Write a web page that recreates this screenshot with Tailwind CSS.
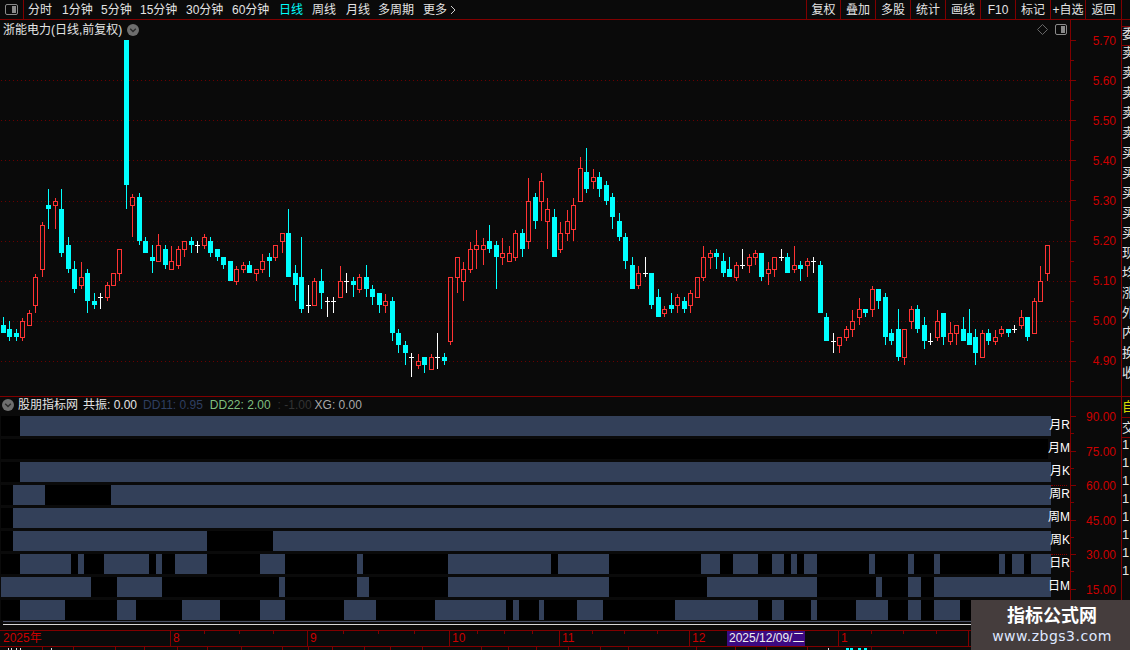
<!DOCTYPE html>
<html lang="en">
  <head>
    <meta charset="UTF-8" />
    <title>浙能电力 日线</title>
    <script src="https://cdn.jsdelivr.net/npm/@tailwindcss/browser@4"></script>
  </head>
  <body class="bg-[#0a0a0a]">
    <div class="relative flex flex-col w-[1130px] h-[650px] overflow-hidden bg-[#0a0a0a] text-[12px] leading-[14px] text-[#e4e4e4] font-['Liberation_Sans','Noto_Sans_CJK_SC',sans-serif]">
      <!-- toolbar -->
      <div class="flex items-center h-[20px] shrink-0 border-b border-[#800000]">
        <div class="flex items-center justify-center w-[24px] h-full border-r border-[#800000]">
          <svg width="13" height="11" viewBox="0 0 13 11"><rect x="0.5" y="0.5" width="12" height="10" rx="1.5" fill="none" stroke="#8a8a8a"/><rect x="7" y="2" width="4" height="7" fill="#8a8a8a"/></svg>
        </div>
        <div class="flex items-center gap-[10px] pl-[4px] flex-1 whitespace-nowrap">
          <span class="w-[24px]">分时</span>
          <span class="w-[29px]">1分钟</span>
          <span class="w-[29px]">5分钟</span>
          <span class="w-[36px]">15分钟</span>
          <span class="w-[36px]">30分钟</span>
          <span class="w-[37px]">60分钟</span>
          <span class="w-[23px] text-[#00ffff]">日线</span>
          <span class="w-[24px]">周线</span>
          <span class="w-[22px]">月线</span>
          <span class="w-[35px]">多周期</span>
          <span class="flex items-center gap-[3px]">更多<svg width="6" height="10" viewBox="0 0 6 10"><path d="M1 1l4 4-4 4" fill="none" stroke="#d0d0d0"/></svg></span>
        </div>
        <div class="flex h-full">
          <span class="flex items-center justify-center w-[34px] border-l border-[#800000]">复权</span>
          <span class="flex items-center justify-center w-[35px] border-l border-[#800000]">叠加</span>
          <span class="flex items-center justify-center w-[35px] border-l border-[#800000]">多股</span>
          <span class="flex items-center justify-center w-[35px] border-l border-[#800000]">统计</span>
          <span class="flex items-center justify-center w-[35px] border-l border-[#800000]">画线</span>
          <span class="flex items-center justify-center w-[35px] border-l border-[#800000]">F10</span>
          <span class="flex items-center justify-center w-[35px] border-l border-[#800000]">标记</span>
          <span class="flex items-center justify-center w-[35px] border-l border-[#800000] whitespace-nowrap">+自选</span>
          <span class="flex items-center justify-center w-[37px] border-x border-[#800000]">返回</span>
          <span class="w-[8px]"></span>
        </div>
      </div>

      <div class="flex flex-1 min-h-0">
        <div class="flex flex-col w-[1121px] shrink-0">
          <!-- price pane -->
          <div class="flex h-[377px] shrink-0 border-b border-[#800000]">
            <div class="relative w-[1070px] shrink-0">
              <svg id="candles" class="block" width="1070" height="376" viewBox="0 20 1070 376" shape-rendering="crispEdges"></svg>
              <div class="absolute left-[3px] top-[3px] flex items-center gap-[5px]">
                <span>浙能电力(日线,前复权)</span>
                <svg width="12" height="12" viewBox="0 0 12 12"><circle cx="6" cy="6" r="6" fill="#6e6e6e"/><path d="M3.2 4.8L6 7.6l2.8-2.8" fill="none" stroke="#2a2a2a" stroke-width="1.4"/></svg>
              </div>
              <div class="absolute right-[3px] top-[4px] flex items-center gap-[7px]">
                <svg width="11" height="11" viewBox="0 0 11 11"><path d="M5.5 .5l5 5-5 5-5-5z" fill="none" stroke="#666"/></svg>
                <svg width="12" height="11" viewBox="0 0 12 11"><rect x="0.5" y="0.5" width="11" height="10" rx="1.5" fill="none" stroke="#8a8a8a"/><rect x="6" y="2" width="4" height="7" fill="#8a8a8a"/></svg>
              </div>
            </div>
            <div class="relative flex-1 border-l border-[#800000] text-[#cc0000]">
              <svg id="price-ticks" class="absolute left-0 top-0" width="8" height="376" shape-rendering="crispEdges"></svg>
              <div class="flex flex-col items-end pr-[5px] pt-[1px]">
                <span class="flex items-center h-[40px]">5.70</span>
                <span class="flex items-center h-[40px]">5.60</span>
                <span class="flex items-center h-[40px]">5.50</span>
                <span class="flex items-center h-[40px]">5.40</span>
                <span class="flex items-center h-[40px]">5.30</span>
                <span class="flex items-center h-[40px]">5.20</span>
                <span class="flex items-center h-[40px]">5.10</span>
                <span class="flex items-center h-[40px]">5.00</span>
                <span class="flex items-center h-[40px]">4.90</span>
              </div>
            </div>
          </div>

          <!-- indicator pane -->
          <div class="flex h-[234px] shrink-0 border-b border-[#800000]">
            <div class="w-[1070px] shrink-0 flex flex-col">
              <div class="flex items-center h-[19px] pl-[2px] pb-[3px] shrink-0 whitespace-nowrap">
                <svg width="12" height="12" viewBox="0 0 12 12"><circle cx="6" cy="6" r="6" fill="#6e6e6e"/><path d="M3.2 4.8L6 7.6l2.8-2.8" fill="none" stroke="#2a2a2a" stroke-width="1.4"/></svg>
                <span class="ml-[4px]">股朋指标网</span>
                <span class="ml-[5px]">共振: 0.00</span>
                <span class="ml-[6px] text-[#2f3f60]">DD11: 0.95</span>
                <span class="ml-[7px] text-[#7fbf7f]">DD22: 2.00</span>
                <span class="ml-[7px] text-[#333333]">: -1.00</span>
                <span class="ml-[3px] text-[#a8a8a8]">XG: 0.00</span>
              </div>
              <div id="bands" class="flex flex-col gap-[3px] pl-[1px] shrink-0"></div>
              <div class="mt-[1px] ml-[3px] h-[1px] bg-[#4a5268]"></div>
              <div class="mt-[2px] ml-[3px] h-[1px] bg-[#d8d8d8]"></div>
            </div>
            <div class="relative flex-1 border-l border-[#800000] text-[#cc0000]">
              <svg id="ind-ticks" class="absolute left-0 top-0" width="8" height="233" shape-rendering="crispEdges"></svg>
              <div class="flex flex-col items-end pr-[5px] pt-[3px]">
                <span class="flex items-center h-[34.5px]">90.00</span>
                <span class="flex items-center h-[34.5px]">75.00</span>
                <span class="flex items-center h-[34.5px]">60.00</span>
                <span class="flex items-center h-[34.5px]">45.00</span>
                <span class="flex items-center h-[34.5px]">30.00</span>
                <span class="flex items-center h-[34.5px]">15.00</span>
              </div>
            </div>
          </div>

          <!-- date axis -->
          <div class="relative flex h-[16px] shrink-0 border-b border-[#800000] text-[#cc0000] whitespace-nowrap">
            <span class="w-[170px] pl-[3px]">2025年</span>
            <span class="w-[137px] pl-[2px] border-l border-[#800000]">8</span>
            <span class="w-[142px] pl-[2px] border-l border-[#800000]">9</span>
            <span class="w-[110px] pl-[2px] border-l border-[#800000]">10</span>
            <span class="w-[130px] pl-[2px] border-l border-[#800000]">11</span>
            <span class="w-[38px] pl-[2px] border-l border-[#800000]">12</span>
            <span class="w-[78px] pl-[2px] bg-[#3c0a82] text-[#f0f0f0]">2025/12/09/二</span>
            <span class="w-[33px]"></span>
            <span class="w-[130px] pl-[2px] border-l border-[#800000]">1</span>
            <span class="w-[20px] pl-[2px] border-l border-[#800000]">2</span>
            <svg id="date-ticks" class="absolute left-0 top-0" width="1121" height="4" shape-rendering="crispEdges"></svg>
          </div>

          <svg id="bottom-strip" class="block" width="1121" height="3" shape-rendering="crispEdges"></svg>
        </div>

        <!-- clipped quote column -->
        <div class="w-[9px] shrink-0 border-l border-[#800000] overflow-hidden text-[13px] whitespace-nowrap">
          <div class="flex flex-col h-[377px] pt-[6px] border-b border-[#800000]">
            <span class="h-[20px] border-y border-[#800000]">委</span>
            <span class="h-[20px]">卖</span>
            <span class="h-[20px]">卖</span>
            <span class="h-[20px]">卖</span>
            <span class="h-[20px]">卖</span>
            <span class="h-[20px]">卖</span>
            <span class="h-[20px]">买</span>
            <span class="h-[20px]">买</span>
            <span class="h-[20px]">买</span>
            <span class="h-[20px]">买</span>
            <span class="h-[20px]">买</span>
            <span class="h-[20px]">现</span>
            <span class="h-[20px]">均</span>
            <span class="h-[20px]">涨</span>
            <span class="h-[20px]">外</span>
            <span class="h-[20px]">内</span>
            <span class="h-[20px]">换</span>
            <span class="h-[20px]">收</span>
          </div>
          <div class="flex items-center h-[21px] text-[#d8d800] border-b border-[#800000]">自</div>
          <div class="flex items-center h-[20px] border-b border-[#800000]">交</div>
          <div class="flex flex-col">
            <span class="h-[18px]">1</span>
            <span class="h-[18px]">1</span>
            <span class="h-[18px]">1</span>
            <span class="h-[18px]">1</span>
            <span class="h-[18px]">1</span>
            <span class="h-[18px]">1</span>
            <span class="h-[18px]">1</span>
            <span class="h-[18px]">1</span>
          </div>
        </div>
      </div>

      <!-- watermark -->
      <div class="absolute left-[971px] top-[600px] flex flex-col items-center w-[159px] h-[50px] pt-[5px] pl-[3px] bg-[#453d3d]">
        <span class="text-[18px] leading-[22px] font-bold text-white">指标公式网</span>
        <span class="text-[14px] leading-[18px] tracking-[0.5px] text-[#dfe8ff] font-['DejaVu_Sans',sans-serif]">www.zbgs3.com</span>
      </div>
    </div>

    <script>
      const SVG_NS = "http://www.w3.org/2000/svg";
      const RED = "#ff3333";
      const CYAN = "#00ffff";
      const LINE = "#800000";

      function addRect(svg, x, y, w, h, fill) {
        const r = document.createElementNS(SVG_NS, "rect");
        r.setAttribute("x", x);
        r.setAttribute("y", y);
        r.setAttribute("width", w);
        r.setAttribute("height", h);
        r.setAttribute("fill", fill);
        svg.appendChild(r);
      }

      // x, high, body top, body bottom, low (pixels), c=cyan r=red w=doji
      const candles = [
        [3,317,325,333,333,"c"],[9,321,329,337,341,"c"],[16,329,333,337,341,"c"],[22,318,321,338,341,"r"],
        [29,310,313,326,326,"r"],[35,274,277,306,313,"r"],[42,222,225,270,277,"r"],[48,189,205,209,229,"c"],
        [55,198,201,206,229,"r"],[61,189,209,253,257,"c"],[68,237,245,269,273,"c"],[74,261,269,289,293,"c"],
        [81,262,277,286,289,"r"],[87,269,273,301,313,"c"],[94,293,301,305,309,"c"],[100,293,297,297,309,"w"],
        [107,282,285,298,301,"r"],[113,273,273,286,286,"r"],[119,249,249,274,281,"r"],[126,40,40,185,209,"c"],
        [132,194,197,206,237,"r"],[139,193,197,241,245,"c"],[145,237,241,253,253,"c"],[152,245,257,261,273,"c"],
        [158,234,245,262,262,"r"],[165,245,249,265,269,"c"],[171,246,261,270,270,"r"],[178,246,249,266,269,"r"],
        [184,241,241,250,257,"r"],[191,237,241,245,253,"c"],[197,241,245,245,253,"w"],[204,234,237,246,249,"r"],
        [210,237,241,253,257,"c"],[217,249,249,257,261,"c"],[223,257,257,265,269,"c"],[230,261,261,281,281,"c"],
        [236,266,269,282,285,"r"],[243,262,265,270,273,"r"],[249,261,265,273,273,"c"],[256,269,269,274,281,"r"],
        [262,254,261,270,273,"r"],[269,253,257,261,277,"c"],[275,245,245,258,261,"r"],[282,233,233,242,253,"r"],
        [288,209,233,277,277,"c"],[295,265,273,285,301,"c"],[301,237,277,309,313,"c"],[308,285,305,305,313,"w"],
        [314,278,281,306,306,"r"],[321,269,281,293,309,"c"],[327,297,301,301,317,"w"],[333,297,301,301,313,"w"],
        [340,266,281,298,298,"r"],[346,273,281,281,293,"w"],[353,277,281,285,297,"c"],[359,274,277,290,293,"r"],
        [366,265,277,289,297,"c"],[372,285,289,297,305,"c"],[379,293,293,305,313,"c"],[385,294,301,306,313,"r"],
        [392,297,301,333,341,"c"],[398,329,333,345,353,"c"],[405,341,345,353,365,"c"],[411,353,357,357,377,"w"],
        [418,354,361,366,369,"r"],[424,357,357,365,373,"c"],[431,354,357,370,370,"r"],[437,333,357,357,369,"w"],
        [444,353,357,361,365,"c"],[450,277,277,342,345,"r"],[457,257,257,278,293,"r"],[463,262,269,282,301,"r"],
        [470,242,249,270,273,"r"],[476,230,245,250,269,"r"],[483,238,245,250,265,"r"],[489,225,241,249,253,"c"],
        [496,241,245,257,289,"c"],[502,238,253,258,265,"r"],[509,246,253,262,262,"r"],[515,230,233,258,261,"r"],
        [522,229,233,249,257,"c"],[528,178,201,242,249,"r"],[535,193,197,221,229,"c"],[541,173,181,202,221,"r"],
        [547,198,209,222,249,"r"],[554,209,217,257,257,"c"],[560,222,233,250,253,"r"],[567,210,221,234,241,"r"],
        [573,198,205,230,241,"r"],[580,157,168,202,202,"r"],[586,148,172,189,193,"c"],[593,169,177,182,189,"r"],
        [599,172,177,189,197,"c"],[606,181,185,201,205,"c"],[612,193,197,217,229,"c"],[619,213,221,237,241,"c"],
        [625,233,237,261,269,"c"],[632,257,265,289,289,"c"],[638,266,273,286,289,"r"],[645,257,273,273,277,"w"],
        [651,273,273,305,309,"c"],[658,289,297,317,317,"c"],[664,306,309,314,317,"r"],[671,293,305,309,313,"c"],
        [677,294,297,306,313,"r"],[684,297,301,309,313,"c"],[690,290,293,306,313,"r"],[697,277,277,298,298,"r"],
        [703,246,257,278,281,"r"],[710,250,253,258,269,"r"],[716,249,253,257,269,"c"],[723,253,261,273,277,"c"],
        [729,257,269,277,277,"c"],[736,262,265,278,281,"r"],[742,249,265,265,269,"w"],[749,254,257,266,273,"r"],
        [755,250,253,258,265,"r"],[761,253,253,277,281,"c"],[768,262,269,274,285,"r"],[774,257,257,270,277,"r"],
        [781,249,257,257,261,"w"],[787,253,257,273,273,"c"],[794,246,265,270,273,"r"],[800,261,265,269,281,"c"],
        [807,258,261,266,277,"r"],[813,257,261,261,273,"w"],[820,261,265,313,313,"c"],[826,313,317,341,341,"c"],
        [833,333,341,341,353,"w"],[839,337,337,346,353,"r"],[846,326,329,338,341,"r"],[852,310,321,330,337,"r"],
        [859,298,309,318,325,"r"],[865,309,309,313,317,"c"],[872,286,289,310,317,"r"],[878,289,289,301,309,"c"],
        [885,293,297,337,345,"c"],[891,329,333,341,345,"c"],[898,309,329,357,361,"c"],[904,329,329,358,365,"r"],
        [911,306,309,322,329,"r"],[917,305,309,329,333,"c"],[924,317,325,341,349,"c"],[930,333,341,341,345,"w"],
        [937,310,321,338,341,"r"],[943,313,313,337,345,"c"],[950,322,333,342,345,"r"],[956,325,325,334,345,"r"],
        [963,317,329,341,341,"c"],[969,309,333,345,345,"c"],[975,329,337,353,365,"c"],[982,330,333,358,358,"r"],
        [988,329,333,341,345,"c"],[995,330,337,342,345,"r"],[1001,326,329,334,337,"r"],[1008,329,329,333,337,"c"],
        [1014,325,329,329,333,"w"],[1021,310,317,326,329,"r"],[1027,317,317,337,341,"c"],[1034,298,301,334,334,"r"],
        [1040,266,281,302,302,"r"],[1047,245,245,274,281,"r"],
      ];

      const chart = document.getElementById("candles");
      // dotted grid lines
      [80, 120, 160, 201, 241, 281, 321, 361].forEach((y) => {
        for (let x = 1; x < 1070; x += 4) addRect(chart, x, y, 1, 1, "#6a0000");
      });
      candles.forEach(([x, hi, top, bot, lo, t]) => {
        if (t === "w") {
          addRect(chart, x, hi, 1, lo - hi, "#ffffff");
          addRect(chart, x - 2, top, 5, 1, "#ffffff");
        } else if (t === "c") {
          addRect(chart, x, hi, 1, lo - hi, CYAN);
          addRect(chart, x - 2, top, 5, bot - top, CYAN);
        } else {
          addRect(chart, x, hi, 1, top - hi, RED);
          addRect(chart, x, bot, 1, lo - bot, RED);
          addRect(chart, x - 2, top, 5, 1, RED);
          addRect(chart, x - 2, bot - 1, 5, 1, RED);
          addRect(chart, x - 2, top, 1, bot - top, RED);
          addRect(chart, x + 2, top, 1, bot - top, RED);
        }
      });

      // axis ticks, y values relative to each svg
      const priceTicks = document.getElementById("price-ticks");
      for (let i = 0; i < 18; i++) {
        const major = i % 2 === 0;
        addRect(priceTicks, 0, Math.round(20 + i * 20.05), major ? 5 : 3, 1, LINE);
      }
      const indTicks = document.getElementById("ind-ticks");
      for (let i = 0; i < 12; i++) {
        const major = i % 2 === 0;
        addRect(indTicks, 0, Math.round(19 + i * 17.25), major ? 5 : 3, 1, LINE);
      }

      const dateTicks = document.getElementById("date-ticks");
      [204, 239, 273, 343, 378, 414, 477, 504, 532, 592, 624, 657, 871, 903, 936].forEach((x) =>
        addRect(dateTicks, x, 0, 1, 3, LINE)
      );

      const strip = document.getElementById("bottom-strip");
      [42, 73, 115, 144, 177, 207, 241, 282, 308, 332, 364, 390, 422, 481, 508, 536, 568, 600, 628, 696, 735, 766, 807, 871].forEach((x) =>
        addRect(strip, x, 0, 1, 3, LINE)
      );
      [8, 11, 16, 20, 51, 828].forEach((x) => addRect(strip, x, 1, 1, 2, "#e0e0e0"));
      [846, 850, 858, 864].forEach((x) => addRect(strip, x, 1, 3, 2, CYAN));

      // signal bands: label, [from, to] in page pixels
      const bands = [
        ["月R", [[20, 1051]]],
        ["月M", []],
        ["月K", [[20, 1051]]],
        ["周R", [[13, 45], [111, 1051]], true],
        ["周M", [[13, 1051]]],
        ["周K", [[13, 207], [273, 1051]]],
        ["日R", [[20, 71], [78, 84], [104, 149], [156, 162], [175, 207], [260, 285], [357, 363], [448, 551], [558, 609], [701, 720], [733, 758], [772, 784], [791, 797], [804, 817], [869, 875], [908, 914], [934, 940], [999, 1005], [1012, 1024], [1031, 1051]], true],
        ["日M", [[1, 91], [117, 162], [279, 285], [357, 369], [448, 609], [707, 817], [876, 882], [908, 921], [934, 1051]]],
        ["", [[20, 65], [117, 136], [182, 220], [260, 285], [344, 376], [435, 506], [513, 519], [539, 544], [577, 603], [675, 758], [772, 784], [811, 817], [856, 888], [908, 921], [934, 960]]],
      ];
      const bandsEl = document.getElementById("bands");
      bands.forEach(([label, segments, dotted]) => {
        const row = document.createElement("div");
        row.className = "flex items-center h-[20px]";
        const track = document.createElement("div");
        track.className = "relative w-[1050px] h-full bg-black";
        segments.forEach(([from, to]) => {
          const seg = document.createElement("div");
          seg.className = "absolute top-0 h-full bg-[#334059]";
          seg.style.left = from - 1 + "px";
          seg.style.width = to - from + "px";
          track.appendChild(seg);
        });
        const text = document.createElement("span");
        text.className = "relative -mt-[2px] whitespace-nowrap text-white";
        text.textContent = label;
        if (dotted) {
          const dots = document.createElement("i");
          dots.className = "absolute left-[2px] -top-[2px] w-[16px] border-t border-dotted border-[#800000]";
          text.appendChild(dots);
        }
        row.append(track, text);
        bandsEl.appendChild(row);
      });
    </script>
  </body>
</html>
